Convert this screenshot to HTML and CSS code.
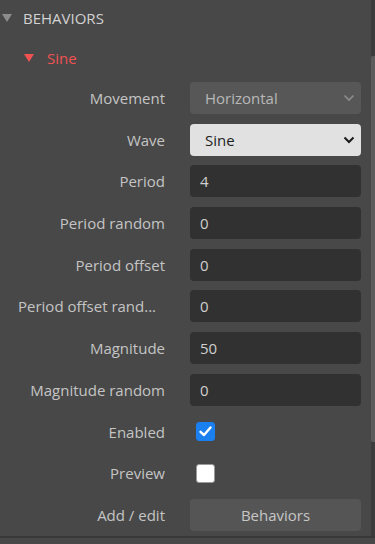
FILE: index.html
```html
<!DOCTYPE html>
<html>
<head>
<meta charset="utf-8">
<link rel="stylesheet" href="styles.css">
</head>
<body>
<div class="page">
  <div class="content">
    <div class="section-head">
      <span class="tri tri-gray"></span>
      <span class="section-title">BEHAVIORS</span>
    </div>
    <div class="sub-head">
      <span class="tri tri-red"></span>
      <span class="sub-title">Sine</span>
    </div>
    <div class="form">
      <div class="row">
        <label class="lbl">Movement</label>
        <div class="select select-dark">
          <span>Horizontal</span>
          <svg class="chev" width="12" height="8" viewBox="0 0 12 8"><path d="M1.5 1.5 L6 6 L10.5 1.5" fill="none" stroke="#8e8e8e" stroke-width="1.6"/></svg>
        </div>
      </div>
      <div class="row">
        <label class="lbl">Wave</label>
        <div class="select select-light">
          <span>Sine</span>
          <svg class="chev" width="12" height="8" viewBox="0 0 12 8"><path d="M1.5 1.5 L6 6 L10.5 1.5" fill="none" stroke="#1a1a1a" stroke-width="2"/></svg>
        </div>
      </div>
      <div class="row">
        <label class="lbl">Period</label>
        <div class="input">4</div>
      </div>
      <div class="row">
        <label class="lbl">Period random</label>
        <div class="input">0</div>
      </div>
      <div class="row">
        <label class="lbl">Period offset</label>
        <div class="input">0</div>
      </div>
      <div class="row">
        <label class="lbl lbl-trunc">Period offset rand...</label>
        <div class="input">0</div>
      </div>
      <div class="row">
        <label class="lbl">Magnitude</label>
        <div class="input">50</div>
      </div>
      <div class="row">
        <label class="lbl">Magnitude random</label>
        <div class="input">0</div>
      </div>
      <div class="row">
        <label class="lbl">Enabled</label>
        <div class="check-cell">
          <span class="check checked">
            <svg width="19" height="19" viewBox="0 0 19 19"><path d="M4.5 9.8 L8 13 L14.5 5.5" fill="none" stroke="#fff" stroke-width="2.4" stroke-linecap="round" stroke-linejoin="round"/></svg>
          </span>
        </div>
      </div>
      <div class="row">
        <label class="lbl">Preview</label>
        <div class="check-cell">
          <span class="check"></span>
        </div>
      </div>
      <div class="row">
        <label class="lbl">Add / edit</label>
        <div class="button">Behaviors</div>
      </div>
    </div>
  </div>
  <div class="scrollbar">
    <div class="thumb"></div>
  </div>
</div>
<div class="footer-line"></div>
</body>
</html>
```

FILE: styles.css
```css
html, body {
  margin: 0;
  padding: 0;
  background: #484848;
  width: 375px;
  height: 544px;
  overflow: hidden;
  font-family: "Open Sans", "Noto Sans", sans-serif;
  font-size: 15px;
  color: #c4c4c4;
}
.page {
  display: flex;
  height: 536px;
}
.content {
  flex: 1;
  display: flex;
  flex-direction: column;
}
.scrollbar {
  width: 4px;
  background: #3c3c3c;
  display: flex;
  flex-direction: column;
}
.thumb {
  margin-top: 56px;
  height: 386px;
  background: #5c5c5c;
  border-radius: 2px 0 0 2px;
}
.footer-line {
  height: 2px;
  background: #383838;
}
.section-head {
  display: flex;
  align-items: center;
  height: 20px;
  margin-top: 8px;
  padding-left: 2px;
}
.tri {
  width: 0;
  height: 0;
  border-left: 5px solid transparent;
  border-right: 5px solid transparent;
}
.tri-gray {
  border-top: 8px solid #8c8c8c;
  margin-right: 11px;
}
.section-title {
  color: #d2d2d2;
}
.sub-head {
  display: flex;
  align-items: center;
  height: 20px;
  margin-top: 20px;
  padding-left: 24px;
}
.tri-red {
  border-top: 8px solid #f05252;
  margin-right: 13px;
}
.sub-title {
  color: #f05252;
}
.form {
  display: flex;
  flex-direction: column;
  gap: 9.7px;
  margin-top: 14px;
}
.row {
  display: flex;
  align-items: center;
  height: 32px;
}
.lbl {
  width: 165px;
  box-sizing: border-box;
  padding-left: 18px;
  text-align: right;
  white-space: nowrap;
  color: #c4c4c4;
  flex: none;
}
.lbl-trunc {
  text-align: left;
}
.select, .input, .button, .check-cell {
  margin-left: 25px;
  width: 171px;
  height: 32px;
  box-sizing: border-box;
  border-radius: 4px;
  display: flex;
  align-items: center;
}
.select {
  justify-content: space-between;
  padding: 0 6px 0 15px;
}
.select-dark {
  background: #575757;
  color: #b8b8b8;
}
.select-light {
  background: #e1e1e1;
  color: #1e1e1e;
}
.input {
  background: #313131;
  padding-left: 10px;
  color: #cfcfcf;
}
.check-cell {
  padding-left: 6px;
}
.check {
  width: 19px;
  height: 19px;
  box-sizing: border-box;
  border-radius: 3px;
  background: #ffffff;
  border: 1px solid #9a9a9a;
  display: flex;
}
.check.checked {
  background: #1a7fef;
  border-color: #1a7fef;
}
.check svg {
  margin: -1px;
}
.button {
  background: #555555;
  justify-content: center;
  color: #c6c6c6;
}
```
